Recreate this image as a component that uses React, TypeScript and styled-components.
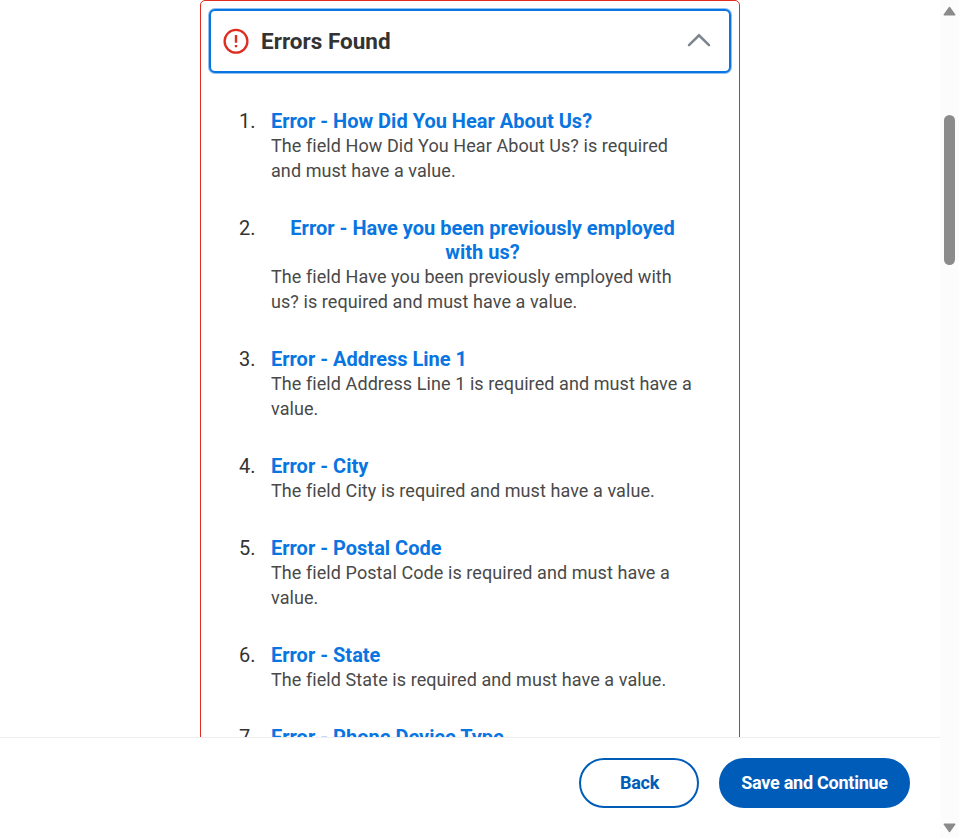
import React from 'react';
import styled, { createGlobalStyle } from 'styled-components';

const Global = createGlobalStyle`
  *, *::before, *::after { box-sizing: border-box; }
  body {
    margin: 0;
    overflow: hidden;
    background: #fff;
    color: #333;
    font-family: Roboto, sans-serif;
  }
  button { font-family: inherit; cursor: pointer; }
`;

const Page = styled.div`
  display: grid;
  grid-template-columns: 1fr 19px;
  height: 838px;
`;

const Main = styled.main`
  display: flex;
  flex-direction: column;
  min-width: 0;
  height: 838px;
`;

const Viewport = styled.div`
  height: 737px;
  overflow: hidden;
`;

const ErrorPanel = styled.section`
  width: 540px;
  height: 900px;
  margin: 0 auto;
  padding: 8px 8px 0;
  border: 1px solid #de2e21;
  border-radius: 5px;
`;

const PanelHeader = styled.button`
  display: flex;
  align-items: center;
  width: 522px;
  height: 64px;
  padding: 0 18px 0 13px;
  border: 2px solid #0875e1;
  border-radius: 6px;
  box-shadow: 0 0 0 1px rgba(8, 117, 225, 0.45);
  background: #fff;
  color: #333;
`;

const PanelTitle = styled.span`
  flex: 1;
  margin-left: 12px;
  text-align: left;
  font-size: 22.5px;
  font-weight: 700;
  line-height: 30px;
`;

const ErrorList = styled.ol`
  display: flex;
  flex-direction: column;
  gap: 33.1px;
  margin: 36px 0 0;
  padding: 0 37px 0 30px;
  list-style: none;
`;

const ErrorItem = styled.li`
  display: grid;
  grid-template-columns: 32px 1fr;
`;

const ItemNumber = styled.span`
  font-size: 20px;
  line-height: 24.4px;
`;

const ErrorLink = styled.button`
  display: block;
  padding: 0;
  border: 0;
  background: none;
  color: #0875e1;
  font-size: 20px;
  font-weight: 700;
  line-height: 24.4px;
  text-align: center;
`;

const Message = styled.div`
  margin-top: -0.6px;
  color: #494949;
  font-size: 18px;
  line-height: 25px;
  letter-spacing: 0.075px;
`;

const Footer = styled.footer`
  display: flex;
  flex: 1;
  justify-content: flex-end;
  gap: 20px;
  padding: 20px 30px 0 0;
  border-top: 1px solid #eee;
`;

const Action = styled.button<{ $primary?: boolean }>`
  width: ${(p) => (p.$primary ? '191px' : '120px')};
  height: 50px;
  padding: ${(p) => (p.$primary ? '0 0 2px' : '0 0 2px 1px')};
  border: 2px solid #005cb9;
  border-radius: 25px;
  background: ${(p) => (p.$primary ? '#005cb9' : '#fff')};
  color: ${(p) => (p.$primary ? '#fff' : '#005cb9')};
  font-size: 18px;
  font-weight: 700;
  letter-spacing: -0.25px;
`;

const ScrollTrack = styled.div`
  display: flex;
  flex-direction: column;
  align-items: center;
  justify-content: space-between;
  padding: 6px 0 5px;
  background: #fcfcfc;
`;

const ScrollLane = styled.div`
  flex: 1;
  padding-top: 99px;
`;

const Thumb = styled.div`
  width: 11px;
  height: 150px;
  border-radius: 6px;
  background: #8b8b8b;
`;

const Svg = styled.svg`
  display: block;
  flex: none;
  overflow: visible;
`;

const errors: { title: string; message: string }[] = [
  { title: 'How Did You Hear About Us?', message: 'The field How Did You Hear About Us? is required and must have a value.' },
  { title: 'Have you been previously employed with us?', message: 'The field Have you been previously employed with us? is required and must have a value.' },
  { title: 'Address Line 1', message: 'The field Address Line 1 is required and must have a value.' },
  { title: 'City', message: 'The field City is required and must have a value.' },
  { title: 'Postal Code', message: 'The field Postal Code is required and must have a value.' },
  { title: 'State', message: 'The field State is required and must have a value.' },
  { title: 'Phone Device Type', message: 'The field Phone Device Type is required and must have a value.' },
];

const AlertIcon = () => (
  <Svg width="25" height="25" viewBox="0 0 25 25" fill="none">
    <circle cx="12" cy="12.3" r="11.4" stroke="#de2e21" strokeWidth="2.3" />
    <path d="M10.8 6.1h2.4v7.6h-2.4zM10.8 16h2.4v2.2h-2.4z" fill="#de2e21" />
  </Svg>
);

const ChevronIcon = () => (
  <Svg width="24" height="16" viewBox="0 0 24 16" fill="none">
    <path d="M2 12.2 12 2.3l10 9.9" stroke="#7b858f" strokeWidth="2.5" strokeLinecap="round" strokeLinejoin="miter" />
  </Svg>
);

const ScrollArrow = ({ down = false }: { down?: boolean }) => (
  <Svg width="13" height="10" viewBox="0 0 13 10">
    <path
      d={down ? 'M1.2 1.2h10.6L6.5 8.5z' : 'M1.2 8.8h10.6L6.5 1.5z'}
      fill="#8b8b8b"
      stroke="#8b8b8b"
      strokeWidth="1.4"
      strokeLinejoin="round"
    />
  </Svg>
);

export default function App() {
  return (
    <>
      <Global />
      <Page>
        <Main>
          <Viewport>
            <ErrorPanel>
              <PanelHeader type="button" aria-expanded="true">
                <AlertIcon />
                <PanelTitle>Errors Found</PanelTitle>
                <ChevronIcon />
              </PanelHeader>
              <ErrorList>
                {errors.map((error, index) => (
                  <ErrorItem key={error.title}>
                    <ItemNumber>{index + 1}.</ItemNumber>
                    <div>
                      <ErrorLink type="button">Error - {error.title}</ErrorLink>
                      <Message>{error.message}</Message>
                    </div>
                  </ErrorItem>
                ))}
              </ErrorList>
            </ErrorPanel>
          </Viewport>
          <Footer>
            <Action type="button">Back</Action>
            <Action type="button" $primary>Save and Continue</Action>
          </Footer>
        </Main>
        <ScrollTrack>
          <ScrollArrow />
          <ScrollLane>
            <Thumb />
          </ScrollLane>
          <ScrollArrow down />
        </ScrollTrack>
      </Page>
    </>
  );
}
